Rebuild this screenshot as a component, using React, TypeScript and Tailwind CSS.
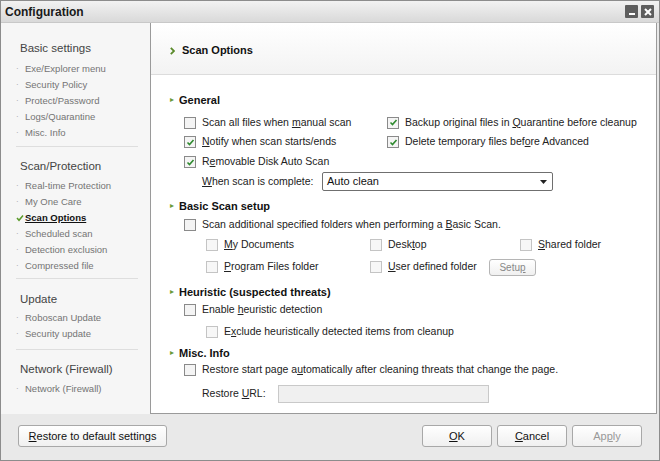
import React from "react";

const F = { fontFamily: '"Liberation Sans", Arial, sans-serif' } as React.CSSProperties;

function U({ children }: { children: React.ReactNode }) {
  return <span className="underline underline-offset-[1px]">{children}</span>;
}

function Box({ checked = false, dim = false }: { checked?: boolean; dim?: boolean }) {
  return (
    <span
      className={`inline-flex w-[12px] h-[12px] shrink-0 items-center justify-center border ${
        dim ? "border-[#c4c4c4] bg-[#f7f7f7]" : "border-[#8a8a8a] bg-[#f4f4f4]"
      }`}
    >
      {checked && (
        <svg width="9" height="9" viewBox="0 0 9 9">
          <path d="M1.5 4.5 L3.5 6.5 L7.5 2" fill="none" stroke="#2f8a2f" strokeWidth="1.6" />
        </svg>
      )}
    </span>
  );
}

function Check({
  checked,
  dim,
  children,
  className = "",
}: {
  checked?: boolean;
  dim?: boolean;
  children: React.ReactNode;
  className?: string;
}) {
  return (
    <div className={`flex items-center gap-[6px] ${className}`}>
      <Box checked={checked} dim={dim} />
      <span className="text-[10.5px] text-[#222] whitespace-nowrap">{children}</span>
    </div>
  );
}

function Heading({ children, className = "" }: { children: React.ReactNode; className?: string }) {
  return (
    <div className={`h-[16px] flex items-center ${className}`}>
      <span className="w-[9px] text-[#6a9a3a] text-[8px] leading-none">▸</span>
      <span className="text-[11px] font-bold text-[#111]">{children}</span>
    </div>
  );
}

function Item({ children, active }: { children: React.ReactNode; active?: boolean }) {
  return (
    <div className="h-[16px] flex items-center pl-[15px]">
      {active ? (
        <svg width="8" height="8" viewBox="0 0 8 8" className="mr-[1px]">
          <path d="M1 4 L3 6.3 L7 1.5" fill="none" stroke="#5a9a2a" strokeWidth="1.5" />
        </svg>
      ) : (
        <span className="w-[9px] text-[#999] text-[8px]">·</span>
      )}
      <span
        className={`text-[9.5px] ${active ? "text-[#111] font-bold underline" : "text-[#747474]"}`}
      >
        {children}
      </span>
    </div>
  );
}

function Group({ children, className = "" }: { children: React.ReactNode; className?: string }) {
  return <div className={`h-[16px] flex items-center pl-[19px] text-[11.5px] text-[#444] ${className}`}>{children}</div>;
}

function Sep({ className = "" }: { className?: string }) {
  return <div className={`mx-[15px] w-[122px] border-t border-[#dedede] ${className}`} />;
}

function Btn({
  children,
  className = "",
  disabled,
}: {
  children: React.ReactNode;
  className?: string;
  disabled?: boolean;
}) {
  return (
    <div
      className={`h-[22px] flex items-center justify-center rounded-[3px] border border-[#a8a8a8] bg-gradient-to-b from-white to-[#f0f0f0] text-[11px] ${
        disabled ? "text-[#999]" : "text-[#111]"
      } ${className}`}
    >
      {children}
    </div>
  );
}

export default function App() {
  return (
    <div style={F} className="w-[660px] h-[461px] flex flex-col border border-[#8c8c8c] bg-[#e9e9e9] overflow-hidden">
      {/* title bar */}
      <div className="h-[22px] shrink-0 flex items-center justify-between px-[4px] bg-gradient-to-b from-[#f2f2f2] to-[#d9d9d9] border-b border-[#c8c8c8]">
        <span className="text-[12px] font-bold text-[#1a1a1a]">Configuration</span>
        <div className="flex gap-[3px] mr-[1px]">
          <div className="w-[13px] h-[13px] bg-[#5e5e5e] rounded-[1px] flex items-end justify-center pb-[3px]">
            <div className="w-[6px] h-[2px] bg-white" />
          </div>
          <div className="w-[13px] h-[13px] bg-[#5e5e5e] rounded-[1px] flex items-center justify-center">
            <svg width="8" height="8" viewBox="0 0 8 8">
              <path d="M1 1 L7 7 M7 1 L1 7" stroke="white" strokeWidth="2" />
            </svg>
          </div>
        </div>
      </div>

      {/* body */}
      <div className="h-[391px] shrink-0 flex">
        {/* sidebar */}
        <div className="w-[150px] shrink-0 bg-[#f6f6f6] border-r border-[#9a9a9a] flex flex-col">
          <Group className="mt-[18px]">Basic settings</Group>
          <div className="mt-[4px]">
            <Item>Exe/Explorer menu</Item>
            <Item>Security Policy</Item>
            <Item>Protect/Password</Item>
            <Item>Logs/Quarantine</Item>
            <Item>Misc. Info</Item>
          </div>
          <Sep className="mt-[5px]" />
          <Group className="mt-[12px]">Scan/Protection</Group>
          <div className="mt-[3px]">
            <Item>Real-time Protection</Item>
            <Item>My One Care</Item>
            <Item active>Scan Options</Item>
            <Item>Scheduled scan</Item>
            <Item>Detection exclusion</Item>
            <Item>Compressed file</Item>
          </div>
          <Sep className="mt-[4px]" />
          <Group className="mt-[13px]">Update</Group>
          <div className="mt-[2px]">
            <Item>Roboscan Update</Item>
            <Item>Security update</Item>
          </div>
          <Sep className="mt-[7px]" />
          <Group className="mt-[12px]">Network (Firewall)</Group>
          <div className="mt-[3px]">
            <Item>Network (Firewall)</Item>
          </div>
        </div>

        {/* content */}
        <div className="w-[506px] shrink-0 bg-white border-r border-b border-[#9a9a9a] flex flex-col">
          <div className="h-[52px] shrink-0 flex items-center pl-[19px] pt-[4px] bg-gradient-to-b from-white to-[#f3f3f3] border-b border-[#dcdcdc]">
            <svg width="5" height="8" viewBox="0 0 5 8" className="mr-[7px]">
              <path d="M0.8 0.8 L4 4 L0.8 7.2" fill="none" stroke="#5a8a2a" strokeWidth="1.8" />
            </svg>
            <span className="text-[11px] font-bold text-[#111]">Scan Options</span>
          </div>

          <div className="flex flex-col pl-[19px]">
            <Heading className="mt-[17px]">General</Heading>
            <div className="mt-[5px] flex flex-col pl-[14px]">
              <div className="h-[19px] flex items-center">
                <Check className="w-[203px]">
                  Scan all files when <U>m</U>anual scan
                </Check>
                <Check checked>
                  Backup original files in <U>Q</U>uarantine before cleanup
                </Check>
              </div>
              <div className="h-[20px] flex items-center">
                <Check checked className="w-[203px]">
                  <U>N</U>otify when scan starts/ends
                </Check>
                <Check checked>
                  Delete temporary files bef<U>o</U>re Advanced
                </Check>
              </div>
              <div className="h-[20px] flex items-center">
                <Check checked>
                  R<U>e</U>movable Disk Auto Scan
                </Check>
              </div>
              <div className="h-[19px] flex items-center pl-[18px]">
                <span className="text-[10.5px] text-[#222] w-[120px]">
                  <U>W</U>hen scan is complete:
                </span>
                <div className="w-[231px] h-[19px] border border-[#6f6f6f] rounded-[2px] bg-white flex items-center justify-between pl-[4px] pr-[5px]">
                  <span className="text-[11px] text-[#111]">Auto clean</span>
                  <svg width="7" height="4" viewBox="0 0 7 4">
                    <path d="M0 0 L7 0 L3.5 4 Z" fill="#222" />
                  </svg>
                </div>
              </div>
            </div>

            <Heading className="mt-[7px]">Basic Scan setup</Heading>
            <div className="mt-[1px] flex flex-col pl-[14px]">
              <div className="h-[20px] flex items-center">
                <Check>
                  Scan additional specified folders when performing a <U>B</U>asic Scan.
                </Check>
              </div>
              <div className="h-[20px] flex items-center pl-[22px]">
                <Check dim className="w-[164px]">
                  <U>M</U>y Documents
                </Check>
                <Check dim className="w-[150px]">
                  Desk<U>t</U>op
                </Check>
                <Check dim>
                  <U>S</U>hared folder
                </Check>
              </div>
              <div className="h-[20px] mt-[2px] flex items-center pl-[22px]">
                <Check dim className="w-[164px]">
                  <U>P</U>rogram Files folder
                </Check>
                <Check dim className="w-[119px]">
                  <U>U</U>ser defined folder
                </Check>
                <div className="w-[47px] h-[17px] rounded-[3px] border border-[#b5b5b5] bg-gradient-to-b from-white to-[#f0f0f0] flex items-center justify-center text-[10px] text-[#888]">
                  Setu<U>p</U>
                </div>
              </div>
            </div>

            <Heading className="mt-[7px]">Heuristic (suspected threats)</Heading>
            <div className="flex flex-col pl-[14px]">
              <div className="h-[20px] flex items-center">
                <Check>
                  Enable <U>h</U>euristic detection
                </Check>
              </div>
              <div className="h-[20px] mt-[2px] flex items-center pl-[22px]">
                <Check dim>
                  E<U>x</U>clude heuristically detected items from cleanup
                </Check>
              </div>
            </div>

            <Heading className="mt-[3px]">Misc. Info</Heading>
            <div className="flex flex-col pl-[14px]">
              <div className="h-[18px] flex items-center">
                <Check>
                  Restore start page a<U>u</U>tomatically after cleaning threats that change the page.
                </Check>
              </div>
              <div className="h-[19px] mt-[5px] flex items-center pl-[18px]">
                <span className="text-[10.5px] text-[#222] w-[76px]">
                  Restore <U>U</U>RL:
                </span>
                <div className="w-[211px] h-[18px] border border-[#c9c9c9] bg-[#f0f0f0]" />
              </div>
            </div>
          </div>
        </div>
      </div>

      {/* footer */}
      <div className="flex-1 flex items-center pl-[17px] pr-[17px] pb-[2px]">
        <Btn className="w-[149px]">
          <U>R</U>estore to default settings
        </Btn>
        <div className="ml-auto flex gap-[5px]">
          <Btn className="w-[70px]">
            <U>O</U>K
          </Btn>
          <Btn className="w-[70px]">
            <U>C</U>ancel
          </Btn>
          <Btn className="w-[70px]" disabled>
            Ap<U>p</U>ly
          </Btn>
        </div>
      </div>
    </div>
  );
}
